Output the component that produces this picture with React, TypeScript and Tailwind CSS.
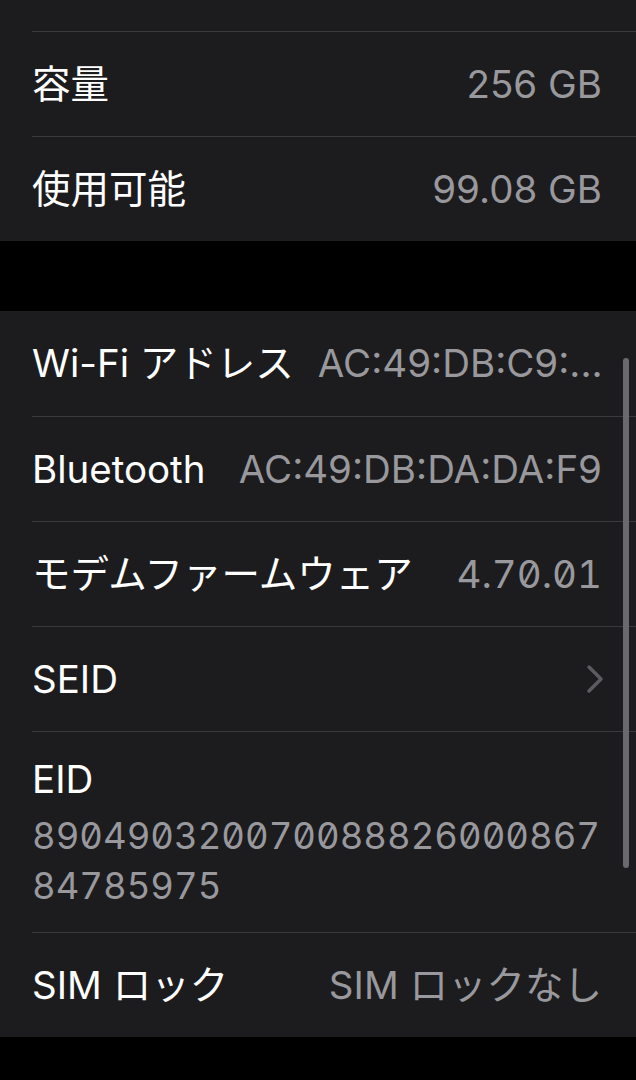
import type { ReactNode } from 'react';

const sans = "font-['Inter','Noto_Sans_CJK_JP',sans-serif]";
const digits = "[font-feature-settings:'tnum','zero']";

type RowProps = {
  label: string;
  value?: ReactNode;
  first?: boolean;
  valueClass?: string;
};

const Row = ({ label, value, first, valueClass }: RowProps) => (
  <div className="pl-8">
    <div
      className={`flex h-[105px] items-center justify-between gap-6 pr-[34px] ${
        first ? '' : 'border-t border-[#3a3a3c]'
      }`}
    >
      <span className="shrink-0 whitespace-nowrap text-[38.5px] leading-[1.25] text-white">{label}</span>
      {value !== undefined && (
        <span className={`whitespace-nowrap text-[38.5px] leading-[1.25] text-[#98989d] ${valueClass ?? ''}`}>
          {value}
        </span>
      )}
    </div>
  </div>
);

const Chevron = () => (
  <svg width="18" height="30" viewBox="0 0 18 30" className="-mr-[2px]">
    <path d="M3 3 L15 15 L3 27" fill="none" stroke="#5b5b60" strokeWidth="3.5" strokeLinecap="round" strokeLinejoin="round" />
  </svg>
);

export default function App() {
  return (
    <div className={`min-h-[1080px] bg-black ${sans} antialiased`}>
      {/* storage group */}
      <div className="bg-[#1c1c1e]">
        <div className="h-[31px]" />
        <Row label="容量" value="256 GB" />
        <Row label="使用可能" value="99.08 GB" />
      </div>

      <div className="h-[70px]" />

      {/* network / hardware group */}
      <div className="relative bg-[#1c1c1e]">
        <Row first label="Wi-Fi アドレス" value="AC:49:DB:C9:..." />
        <Row label="Bluetooth" value="AC:49:DB:DA:DA:F9" />
        <Row label="モデムファームウェア" value="4.70.01" valueClass={digits} />
        <Row label="SEID" value={<Chevron />} />

        <div className="pl-8">
          <div className="flex flex-col border-t border-[#3a3a3c] pt-[25px] pb-[21px] pr-[30px]">
            <span className="text-[38.5px] leading-[44px] text-white">EID</span>
            <span className={`mt-[10px] break-all text-[36.5px] leading-[50px] text-[#98989d] ${digits}`}>
              89049032007008882600086784785975
            </span>
          </div>
        </div>

        <Row label="SIM ロック" value="SIM ロックなし" />

        {/* scroll indicator */}
        <div className="absolute right-[7px] top-[47px] h-[510px] w-[6px] rounded-full bg-[#6a6a6e]" />
      </div>
    </div>
  );
}
